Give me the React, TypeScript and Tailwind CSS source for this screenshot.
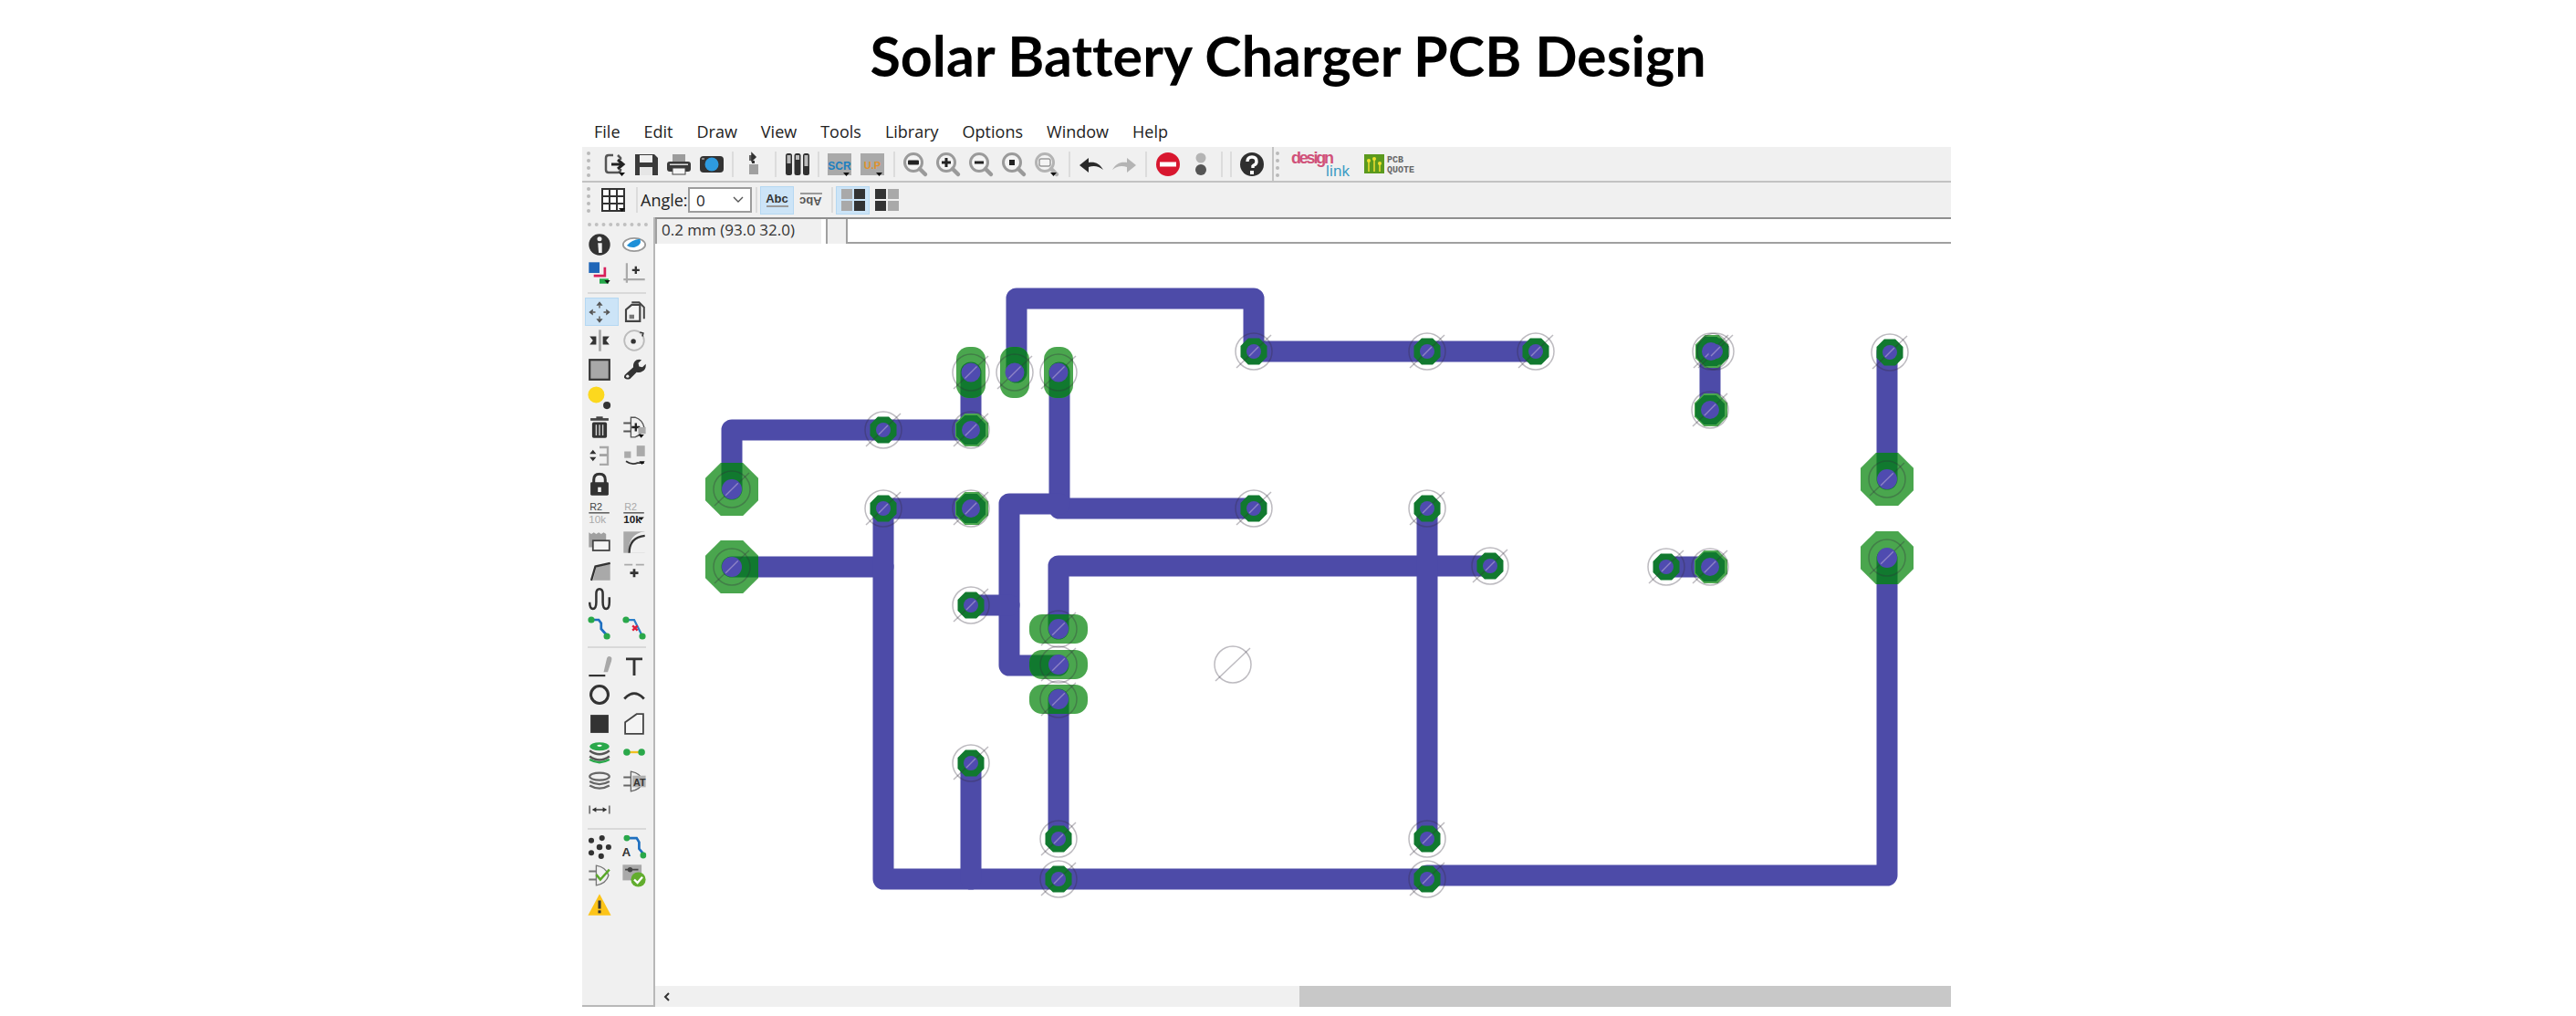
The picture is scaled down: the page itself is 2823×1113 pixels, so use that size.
const D = "#333333";

function Ic({ children, w = 30 }: { children: React.ReactNode; w?: number }) {
  return (
    <svg viewBox={`0 0 ${w} 30`} width={w} height={30}>
      {children}
    </svg>
  );
}

const Caret = ({ x = 22, y = 25 }: { x?: number; y?: number }) => <path d={`M${x} ${y}h7l-3.5 4z`} fill="#111" />;

function Mag({ inner, gray, caret }: { inner: React.ReactNode; gray?: boolean; caret?: boolean }) {
  const s = gray ? "#b3b3b3" : "#9a9a9a";
  return (
    <Ic>
      <circle cx="13" cy="13" r="9.5" fill="#f4f4f4" stroke={s} strokeWidth="3" />
      <path d="M20 20l6 6" stroke={s} strokeWidth="4.5" strokeLinecap="round" />
      {inner}
      {caret && <Caret x={19} y={24} />}
    </Ic>
  );
}

function Tool({ children, className = "" }: { children: React.ReactNode; className?: string }) {
  return <div className={`w-[36px] h-[36px] flex items-center justify-center shrink-0 ${className}`}>{children}</div>;
}

function Sep({ className = "w-[9px]" }: { className?: string }) {
  return (
    <div className={`h-[28px] flex justify-center shrink-0 ${className}`}>
      <div className="w-[2px] h-full bg-[#dcdcdc]" />
    </div>
  );
}

function Grip() {
  return <div className="w-[4px] h-[28px] border-l-4 border-dotted border-[#b9b9b9] shrink-0" />;
}

function TopBar() {
  return (
    <div className="h-[39px] bg-[#f0f0f0] border-b-2 border-[#c2c2c2] flex items-center pl-[5px]">
      <Grip />
      <div className="w-[10px]" />
      <Tool>
        <Ic>
          <path d="M12 5H7q-3 0-3 3v13q0 3 3 3h10q3 0 3-3v-1M20 10V8l-3-3" fill="none" stroke="#555" strokeWidth="2.5" />
          <path d="M10 15h11M17 10l6 5-6 5" fill="none" stroke="#222" strokeWidth="3" />
          <Caret x={18} y={24} />
        </Ic>
      </Tool>
      <Tool className="-ml-[3px]">
        <Ic>
          <path d="M3 4h21l4 4v19H3z" fill="#3a3a3a" />
          <rect x="8" y="5" width="14" height="8" fill="#f0f0f0" />
          <rect x="8" y="18" width="14" height="9" fill="#e6e6e6" />
        </Ic>
      </Tool>
      <Tool>
        <Ic>
          <rect x="8" y="4" width="14" height="8" fill="#9c9c9c" />
          <rect x="2" y="12" width="26" height="11" rx="3" fill="#3a3a3a" />
          <rect x="8" y="19" width="14" height="7" fill="#f4f4f4" stroke="#444" />
          <rect x="5" y="14.5" width="20" height="1.5" fill="#ddd" />
        </Ic>
      </Tool>
      <Tool>
        <Ic>
          <rect x="2" y="6" width="26" height="18" rx="4" fill="#333" />
          <circle cx="15" cy="15" r="7.5" fill="#2e9be0" />
          <rect x="4" y="8" width="3" height="2" fill="#888" />
        </Ic>
      </Tool>
      <Sep className="w-[10px]" />
      <Tool>
        <Ic>
          <path d="M13 3l4 4-4 4zM10 8h4M10 6h3M10 10h3" stroke={D} strokeWidth="1.5" fill={D} />
          <rect x="13" y="11" width="3" height="3" fill={D} />
          <rect x="10" y="15" width="10" height="11" fill="#a0a0a0" />
        </Ic>
      </Tool>
      <Sep className="w-[12px]" />
      <Tool>
        <Ic>
          <rect x="2" y="3" width="7" height="24" rx="2.5" fill="#303030" />
          <rect x="11.5" y="3" width="7" height="24" rx="2.5" fill="#303030" />
          <rect x="21" y="3" width="7" height="24" rx="2.5" fill="#303030" />
          <rect x="3.5" y="5" width="4" height="9" fill="#bbb" />
          <rect x="13" y="5" width="4" height="5" fill="#bbb" />
          <rect x="22.5" y="5" width="4" height="12" fill="#bbb" />
        </Ic>
      </Tool>
      <Sep className="w-[10px]" />
      <Tool>
        <Ic>
          <rect x="2" y="3" width="26" height="24" fill="#a9a9a9" />
          <text x="15" y="21" textAnchor="middle" fontFamily="Liberation Sans" fontSize="12" fontWeight="700" fill="#1c7fc0">SCR</text>
          <Caret x={19} y={24} />
        </Ic>
      </Tool>
      <Tool>
        <Ic>
          <rect x="2" y="3" width="26" height="24" fill="#a9a9a9" />
          <text x="15" y="20" textAnchor="middle" fontFamily="Liberation Sans" fontSize="11" fontWeight="700" fill="#e0912a">U.P</text>
          <Caret x={19} y={24} />
        </Ic>
      </Tool>
      <Sep className="w-[11px]" />
      <Tool>
        <Mag inner={<rect x="7" y="10.5" width="12" height="5" rx="1" fill="#222" />} />
      </Tool>
      <Tool>
        <Mag inner={<path d="M13 8v10M8 13h10" stroke="#222" strokeWidth="3" />} />
      </Tool>
      <Tool>
        <Mag inner={<path d="M8 13h10" stroke="#222" strokeWidth="3" />} />
      </Tool>
      <Tool>
        <Mag inner={<rect x="10" y="10" width="6" height="6" fill="#222" />} />
      </Tool>
      <Tool>
        <Mag gray caret inner={<rect x="7" y="9" width="12" height="8" rx="2" fill="#f4f4f4" stroke="#999" strokeWidth="1.5" />} />
      </Tool>
      <Sep className="w-[13px]" />
      <Tool>
        <Ic>
          <path d="M2 16l10-8v5c7-1 12 1 16 8-5-4-10-5-16-3v6z" fill="#2a2a2a" />
        </Ic>
      </Tool>
      <Tool>
        <Ic>
          <path d="M28 16L18 8v5C11 12 6 14 2 21c5-4 10-5 16-3v6z" fill="#b4b4b4" />
        </Ic>
      </Tool>
      <Sep className="w-[12px]" />
      <Tool>
        <Ic>
          <circle cx="15" cy="15" r="13" fill="#d8172f" />
          <rect x="6" y="12.5" width="18" height="5" fill="#fff" />
        </Ic>
      </Tool>
      <Tool>
        <Ic>
          <circle cx="15" cy="8" r="5.5" fill="#b4b4b4" />
          <circle cx="15" cy="21" r="6" fill="#555" />
        </Ic>
      </Tool>
      <Sep className="w-[10px]" />
      <Sep className="w-[10px]" />
      <Tool>
        <Ic>
          <circle cx="15" cy="15" r="13" fill="#2f2f2f" />
          <path d="M10 12q0-5 5-5t5 5q0 3-3 4l-1 1v2" fill="none" stroke="#fff" strokeWidth="3.4" />
          <rect x="13" y="22" width="4" height="4" fill="#fff" />
        </Ic>
      </Tool>
      <div className="w-[4px]" />
      <div className="w-[2px] h-full bg-[#c4c4c4] mr-[2px]" />
      <Grip />
      <div className="w-[13px]" />
      <svg viewBox="0 0 66 36" width={66} height={36}>
        <text x="0" y="17" fontFamily="Liberation Sans" fontSize="18" fontWeight="700" fill="#d0527a" textLength="47">design</text>
        <text x="38" y="31" fontFamily="Liberation Sans" fontSize="17" fill="#3d9cc5" textLength="26">link</text>
      </svg>
      <div className="w-[14px]" />
      <svg viewBox="0 0 58 24" width={58} height={24}>
        <rect x="0" y="1" width="22" height="21" fill="#5b9a1e" />
        <path d="M5 20V9M11 20V6M17 20V12" stroke="#f0e030" strokeWidth="1.5" />
        <circle cx="5" cy="8" r="2" fill="#f0e030" />
        <circle cx="11" cy="6" r="2" fill="#f0e030" />
        <circle cx="17" cy="11" r="2" fill="#f0e030" />
        <text x="25" y="10" fontFamily="Liberation Mono" fontSize="10" fontWeight="700" fill="#666">PCB</text>
        <text x="25" y="21" fontFamily="Liberation Mono" fontSize="10" fontWeight="700" fill="#666">QUOTE</text>
      </svg>
    </div>
  );
}

function FourSquares({ flip }: { flip?: boolean }) {
  const a = flip ? "bg-[#333]" : "bg-[#a9a9a9]";
  const b = flip ? "bg-[#a9a9a9]" : "bg-[#333]";
  return (
    <div className="grid grid-cols-2 gap-[2px] w-[26px]">
      <div className={`h-[11px] ${a}`} />
      <div className={`h-[11px] ${b}`} />
      <div className={`h-[11px] ${a}`} />
      <div className={`h-[11px] ${b}`} />
    </div>
  );
}

function SecondBar() {
  return (
    <div className="h-[38px] bg-[#f0f0f0] flex items-center pl-[5px]">
      <Grip />
      <div className="w-[10px]" />
      <Ic>
        <rect x="3" y="3" width="24" height="24" fill="#fff" stroke="#333" strokeWidth="2" />
        <path d="M3 11h24M3 19h24M11 3v24M19 3v24" stroke="#333" strokeWidth="2" />
        <Caret x={21} y={24} />
      </Ic>
      <div className="w-[6px]" />
      <Sep />
      <span className="text-[18px] text-[#222] leading-none w-[52px]">Angle:</span>
      <div className="w-[70px] h-[28px] bg-white border-2 border-[#9c9c9c] flex items-center justify-between px-[7px]">
        <span className="text-[17px] text-[#222] leading-none">0</span>
        <svg viewBox="0 0 12 8" width={12} height={8}>
          <path d="M1 1l5 5 5-5" fill="none" stroke="#555" strokeWidth="1.4" />
        </svg>
      </div>
      <Sep />
      <div className="w-[37px] h-[31px] bg-[#cce4f7] border border-[#b5d8f2] flex flex-col items-center justify-center">
        <span className="text-[13px] font-bold text-[#333] leading-none font-['Liberation_Sans']">Abc</span>
        <div className="w-[24px] h-[2px] bg-[#9a9a9a] mt-[1px]" />
      </div>
      <div className="w-[37px] flex flex-col items-center justify-center">
        <div className="w-[24px] h-[2px] bg-[#9a9a9a] mb-[1px]" />
        <span className="text-[13px] font-bold text-[#555] leading-none font-['Liberation_Sans'] rotate-180">Abc</span>
      </div>
      <Sep />
      <div className="w-[37px] h-[31px] bg-[#cce4f7] border border-[#b5d8f2] flex items-center justify-center">
        <FourSquares />
      </div>
      <div className="w-[37px] flex items-center justify-center">
        <FourSquares flip />
      </div>
    </div>
  );
}

function LeftSep() {
  return <div className="h-[2px] mx-[6px] bg-[#d9d9d9]" />;
}

const leftA = [
  <Ic key="i">
    <circle cx="15" cy="15" r="13" fill="#333" />
    <circle cx="15" cy="8" r="2.8" fill="#f0f0f0" />
    <path d="M13 13h5v12h-4z" fill="#f0f0f0" />
  </Ic>,
  <Ic key="eye">
    <ellipse cx="15" cy="15" rx="13.5" ry="8" fill="#fff" stroke="#999" strokeWidth="2" />
    <path d="M6 16q6-7 16-8 3 7-6 10-6 1-10-2z" fill="#1e90d8" />
  </Ic>,
  <Ic key="layers">
    <rect x="2" y="2" width="13" height="13" fill="#1f66b8" />
    <path d="M8 17h12V8h3v12H8z" fill="#d81f5a" />
    <rect x="15" y="22" width="11" height="6" fill="#25a84a" />
    <Caret x={21} y={24} />
  </Ic>,
  <Ic key="axis">
    <path d="M6 3v24M2 23h26" stroke="#aaa" strokeWidth="2.5" />
    <path d="M17 7v9M12.5 11.5h9" stroke="#333" strokeWidth="2.6" />
  </Ic>,
];

const leftB = [
  <Ic key="move">
    <path d="M15 2l4 5h-8zM15 28l-4-5h8zM2 15l5-4v8zM28 15l-5 4v-8z" fill="#555" />
    <path d="M15 7v3M15 20v3M7 15h3M20 15h3" stroke="#777" strokeWidth="2" />
  </Ic>,
  <Ic key="copy">
    <path d="M12 6l4 0 6 0 0 20H5V12z" fill="#f4f4f4" stroke="#444" strokeWidth="2.4" />
    <path d="M12 3h9l6 6v14" fill="none" stroke="#444" strokeWidth="2.2" />
    <rect x="9" y="18" width="6" height="5" fill="#777" />
  </Ic>,
  <Ic key="mirror">
    <rect x="14" y="2" width="3" height="26" fill="#a9a9a9" />
    <path d="M3 10h8v10H3l4-5zM27 10h-8v10h8l-4-5z" fill="#333" />
  </Ic>,
  <Ic key="rot">
    <circle cx="15" cy="15" r="12" fill="none" stroke="#bbb" strokeWidth="2" />
    <circle cx="14" cy="16" r="3" fill="#333" />
    <path d="M22 5l4 1-1 4" fill="none" stroke="#333" strokeWidth="1.6" />
  </Ic>,
  <Ic key="square">
    <rect x="3" y="3" width="24" height="24" fill="#a8a8a8" stroke="#333" strokeWidth="2.4" />
  </Ic>,
  <Ic key="wrench">
    <path d="M3 25q-1-3 2-5l9-8q-1-6 4-9 3-1 6 0l-4 4 1 4 4 1 4-4q1 6-4 9-3 2-7 1l-8 8q-4 2-7-1z" fill="#333" />
    <circle cx="7" cy="23" r="1.8" fill="#f0f0f0" />
  </Ic>,
  <Ic key="dot">
    <circle cx="11" cy="11" r="10" fill="#fcd81e" />
    <circle cx="24" cy="24" r="4.5" fill="#333" />
  </Ic>,
  <span key="empty" />,
  <Ic key="trash">
    <rect x="6" y="9" width="18" height="19" rx="2" fill="#333" />
    <rect x="4" y="4" width="22" height="3" fill="#444" />
    <rect x="11" y="2" width="8" height="3" fill="#444" />
    <path d="M11 12v13M15 12v13M19 12v13" stroke="#cfcfcf" strokeWidth="1.6" />
  </Ic>,
  <Ic key="plug">
    <path d="M11 3h5q9 3 11 12-2 9-11 12h-5z" fill="#f0f0f0" stroke="#555" strokeWidth="1.5" />
    <path d="M2 10h9M2 20h9" stroke="#555" strokeWidth="2" />
    <path d="M17 10v10M12 15h10" stroke="#222" strokeWidth="2.6" />
    <rect x="20" y="15" width="9" height="8" fill="#a9a9a9" />
    <Caret x={20} y={24} />
  </Ic>,
  <Ic key="swap">
    <path d="M7 8l4 5H3zM7 22l-4-5h8z" fill="#333" />
    <path d="M15 5h10v21H15" fill="none" stroke="#a9a9a9" strokeWidth="2.6" />
    <rect x="15" y="13" width="9" height="3" fill="#a0a0a0" />
  </Ic>,
  <Ic key="align">
    <rect x="3" y="10" width="8" height="8" fill="#aaa" />
    <rect x="18" y="3" width="10" height="13" fill="#aaa" />
    <path d="M5 22q7 5 14 2h8" fill="none" stroke="#333" strokeWidth="2" />
    <Caret x={21} y={22} />
  </Ic>,
  <Ic key="lock">
    <path d="M8 13V9q0-7 7-7t7 7v4" fill="none" stroke="#333" strokeWidth="3.4" />
    <rect x="4" y="12" width="22" height="16" rx="1.5" fill="#333" />
    <path d="M13 18h4v6h-4z" fill="#f0f0f0" />
  </Ic>,
  <span key="empty2" />,
  <svg key="r1" viewBox="0 0 30 30" width={30} height={30}>
    <text x="3" y="12" fontFamily="Liberation Sans" fontSize="12" fill="#444">R2</text>
    <rect x="2" y="14" width="25" height="1.6" fill="#555" />
    <text x="2" y="27" fontFamily="Liberation Sans" fontSize="13" fill="#aaa">10k</text>
  </svg>,
  <svg key="r2" viewBox="0 0 30 30" width={30} height={30}>
    <text x="3" y="12" fontFamily="Liberation Sans" fontSize="12" fill="#aaa">R2</text>
    <rect x="2" y="14" width="25" height="1.6" fill="#555" />
    <text x="2" y="27" fontFamily="Liberation Sans" fontSize="13" fontWeight="700" fill="#222">10k</text>
    <Caret x={20} y={20} />
  </svg>,
  <Ic key="zone">
    <path d="M2 3l3 2 3-2 3 2 3-2 3 2 3-2 3 2v16H2z" fill="#a0a0a0" />
    <rect x="7" y="13" width="20" height="12" fill="#f4f4f4" stroke="#444" strokeWidth="2" />
  </Ic>,
  <Ic key="fillet">
    <rect x="2" y="2" width="26" height="26" fill="#a9a9a9" />
    <path d="M29 2v0H28Q8 4 8 28H29V2z" fill="#f0f0f0" />
    <path d="M28 7Q9 9 9 28" fill="none" stroke="#333" strokeWidth="2.6" />
  </Ic>,
  <Ic key="cham">
    <path d="M7 27L11 11 28 6v21z" fill="#a9a9a9" />
    <path d="M5 27L10 10 28 6" fill="none" stroke="#333" strokeWidth="2.6" />
  </Ic>,
  <Ic key="split">
    <path d="M3 8h10M17 8h10" stroke="#aaa" strokeWidth="2" />
    <path d="M15 13v10M10 18h10" stroke="#333" strokeWidth="3" />
  </Ic>,
  <Ic key="wave">
    <path d="M3 18q0 8 4 8t4-8V8q0-6 4-6t4 6v10q0 8 4 8t4-8v-6" fill="none" stroke="#333" strokeWidth="2.8" />
  </Ic>,
  <span key="empty3" />,
  <Ic key="route">
    <path d="M5 5h9l3 4v7l8 9" fill="none" stroke="#1e6fc0" strokeWidth="3" />
    <circle cx="5" cy="5" r="4" fill="#2aa84a" />
    <circle cx="24" cy="25" r="4" fill="#2aa84a" />
  </Ic>,
  <Ic key="unroute">
    <path d="M5 5h10l10 20" fill="none" stroke="#2a7fc8" strokeWidth="2.5" />
    <circle cx="5" cy="5" r="4" fill="#2aa84a" />
    <circle cx="25" cy="25" r="4" fill="#2aa84a" />
    <path d="M13 12l6 6M19 12l-6 6" stroke="#e01f3d" strokeWidth="2.6" />
  </Ic>,
];

const leftC = [
  <Ic key="line">
    <rect x="2" y="25" width="20" height="2.4" fill="#333" />
    <path d="M20 22l4-17q1-3 4-2t2 4l-5 15z" fill="#a8a8a8" />
  </Ic>,
  <Ic key="t">
    <path d="M5 6h20M15 6v20" stroke="#333" strokeWidth="3.2" fill="none" />
  </Ic>,
  <Ic key="circle">
    <circle cx="15" cy="15" r="10.5" fill="none" stroke="#333" strokeWidth="3.4" />
  </Ic>,
  <Ic key="arc">
    <path d="M3 20Q15 7 27 20" fill="none" stroke="#333" strokeWidth="3" />
  </Ic>,
  <Ic key="rect">
    <rect x="4" y="4" width="22" height="22" fill="#333" />
  </Ic>,
  <Ic key="poly">
    <path d="M4 27V13L18 3h8v24z" fill="#f4f4f4" stroke="#444" strokeWidth="2" />
  </Ic>,
  <Ic key="stack">
    <ellipse cx="15" cy="8" rx="12" ry="5" fill="#2aa84a" />
    <ellipse cx="15" cy="7" rx="3" ry="1.2" fill="#fff" />
    <path d="M3 13q12 9 24 0M3 20q12 9 24 0" fill="none" stroke="#555" strokeWidth="2.6" />
    <path d="M3 24q12 7 24 0" fill="none" stroke="#2aa84a" strokeWidth="2.6" />
  </Ic>,
  <Ic key="link">
    <path d="M6 15h18" stroke="#f0c020" strokeWidth="2.6" />
    <circle cx="6" cy="15" r="4.2" fill="#2aa84a" />
    <circle cx="24" cy="15" r="4.2" fill="#2aa84a" />
  </Ic>,
  <Ic key="disc">
    <ellipse cx="15" cy="9" rx="12" ry="4.5" fill="#f0f0f0" stroke="#666" strokeWidth="2.4" />
    <path d="M3 15q12 7 24 0M3 20q12 7 24 0" fill="none" stroke="#666" strokeWidth="2.6" />
  </Ic>,
  <Ic key="at">
    <path d="M11 3q12 2 15 12-3 10-15 12z" fill="#f0f0f0" stroke="#666" strokeWidth="1.5" />
    <path d="M2 10h9M2 20h9" stroke="#666" strokeWidth="2" />
    <rect x="13" y="8" width="16" height="14" fill="#b0b0b0" />
    <text x="14" y="20" fontFamily="Liberation Sans" fontSize="12" fontWeight="700" fill="#333">AT</text>
  </Ic>,
  <Ic key="dim">
    <path d="M2 10v10h2V10zM26 10v10h2V10z" fill="#777" />
    <path d="M7 15h16" stroke="#333" strokeWidth="1.6" />
    <path d="M6 15l5-3v6zM24 15l-5-3v6z" fill="#333" />
  </Ic>,
  <span key="empty4" />,
];

const leftD = [
  <Ic key="ratsnest">
    <circle cx="15" cy="15" r="3.6" fill="#333" />
    <circle cx="5" cy="7" r="3.4" fill="#333" />
    <circle cx="18" cy="4" r="3.4" fill="#333" />
    <circle cx="5" cy="22" r="3.4" fill="#333" />
    <circle cx="26" cy="15" r="3.4" fill="#333" />
    <circle cx="17" cy="26" r="3.4" fill="#333" />
  </Ic>,
  <Ic key="auto">
    <path d="M7 4h11l3 5v8l6 7" fill="none" stroke="#1e6fc0" strokeWidth="3" />
    <circle cx="6" cy="4" r="3.8" fill="#2aa84a" />
    <circle cx="26" cy="25" r="3.8" fill="#2aa84a" />
    <text x="0" y="26" fontFamily="Liberation Sans" fontSize="15" fontWeight="700" fill="#333">A</text>
  </Ic>,
  <Ic key="gate">
    <path d="M11 3q12 2 15 12-3 10-15 12z" fill="#f0f0f0" stroke="#777" strokeWidth="1.5" />
    <path d="M2 10h9M2 20h9" stroke="#777" strokeWidth="2" />
    <path d="M11 14l5 6 11-12" fill="none" stroke="#5aa82a" strokeWidth="2.8" />
  </Ic>,
  <Ic key="drc">
    <rect x="1" y="2" width="23" height="19" fill="#a9a9a9" />
    <path d="M4 8h16" stroke="#444" strokeWidth="2" />
    <circle cx="10" cy="8" r="3" fill="#444" />
    <circle cx="20" cy="20" r="9" fill="#62ad2e" />
    <path d="M15 20l4 4 6-7" fill="none" stroke="#fff" strokeWidth="2.6" />
  </Ic>,
  <Ic key="warn">
    <path d="M15 2L29 28H1z" fill="#fcc419" />
    <path d="M15 10v10" stroke="#333" strokeWidth="3.4" />
    <rect x="13.3" y="22" width="3.4" height="3.4" fill="#333" />
  </Ic>,
];

function Cells({ items, active }: { items: React.ReactNode[]; active?: boolean }) {
  return (
    <div className="grid grid-cols-2 auto-rows-[31.5px]">
      {items.map((it, i) => (
        <div key={i} className="relative flex items-center justify-center">
          {active && i === 0 && <div className="absolute left-[3px] top-0 w-[37px] h-[31px] bg-[#cce4f7] border border-[#b5d8f2]" />}
          <div className="relative flex scale-[0.9]">{it}</div>
        </div>
      ))}
    </div>
  );
}

function LeftBar() {
  return (
    <div className="w-[80px] bg-[#f0f0f0] border-r-2 border-b-2 border-[#b8b8b8] shrink-0 pt-[14px] relative">
      <div className="absolute top-[6px] left-[6px] right-[6px] h-[4px] border-t-4 border-dotted border-[#c0c0c0]" />
      <div className="pr-[2px]">
        <Cells items={leftA} />
        <div className="h-[11px] flex flex-col justify-center"><LeftSep /></div>
        <Cells items={leftB} active />
        <div className="h-[10px] flex flex-col justify-center"><LeftSep /></div>
        <Cells items={leftC} />
        <div className="h-[9px] flex flex-col justify-center"><LeftSep /></div>
        <Cells items={leftD} />
      </div>
    </div>
  );
}

type P = [number, number];

function octa(x: number, y: number, r: number) {
  const k = r * 0.42;
  return [
    [x - k, y - r], [x + k, y - r], [x + r, y - k], [x + r, y + k],
    [x + k, y + r], [x - k, y + r], [x - r, y + k], [x - r, y - k],
  ].map((p) => p.join(",")).join(" ");
}

const traces = [
  "M802 536V471H1064V408",
  "M802 621H968",
  "M1064 557H968V963H1564",
  "M1564 959H2068V612",
  "M1064 836V963",
  "M1161 408V557H1374",
  "M1161 552H1106V729H1160",
  "M1064 663H1106",
  "M1633 620H1160V689",
  "M1160 766V919",
  "M1114 408V327H1374V385H1683",
  "M1564 557V919",
  "M1874 385V449",
  "M2068 386V525",
  "M1826 621H1874",
];

const bigPads: P[] = [[802, 536], [802, 621], [2068, 525], [2068, 611]];
const tallPads: P[] = [[1064, 408], [1112, 408], [1160, 408]];
const widePads: P[] = [[1160, 689], [1160, 728], [1160, 766]];
const rimPads: P[] = [[1064, 471], [1064, 557], [1874, 621], [1875, 385], [1874, 449]];
const smallPads: P[] = [
  [968, 471], [968, 557], [1374, 385], [1564, 385], [1683, 385], [1374, 557], [1564, 557], [1633, 620],
  [1064, 663], [1064, 836], [1160, 919], [1160, 963], [1564, 919], [1564, 963], [1826, 621], [1880, 385], [2071, 386],
];

function Ring({ p }: { p: P }) {
  const [x, y] = p;
  return (
    <g fill="none" stroke="#332a3a" strokeOpacity="0.32" strokeWidth="1.5">
      <circle cx={x} cy={y} r="20" />
      <path d={`M${x - 19} ${y + 18}L${x + 19} ${y - 18}`} />
    </g>
  );
}

function Hole({ p, r }: { p: P; r: number }) {
  const [x, y] = p;
  const d = r * 0.62;
  return (
    <g>
      <circle cx={x} cy={y} r={r} fill="#4f4bb0" />
      <path d={`M${x - d} ${y + d}L${x + d} ${y - d}`} stroke="#8f84c6" strokeWidth="1.3" />
    </g>
  );
}

function Board() {
  const lightShapes = (
    <>
      {bigPads.map((p) => <polygon key={p.join()} points={octa(p[0], p[1], 29)} />)}
      {tallPads.map((p) => <rect key={p.join()} x={p[0] - 16} y={p[1] - 28} width="32" height="56" rx="14" />)}
      {widePads.map((p) => <rect key={p.join()} x={p[0] - 32} y={p[1] - 16} width="64" height="32" rx="14" />)}
    </>
  );
  return (
    <svg viewBox="718 268 1420 812" className="block w-full flex-1 min-h-0 bg-white">
      <defs>
        <clipPath id="padclip">{lightShapes}</clipPath>
      </defs>
      <g fill="none" stroke="#4d4ba8" strokeWidth="23" strokeLinejoin="round" strokeLinecap="round">
        {traces.map((d) => <path key={d} d={d} />)}
      </g>
      <g fill="#4aa64e">{lightShapes}</g>
      <g clipPath="url(#padclip)" fill="none" stroke="#11792f" strokeWidth="23" strokeLinecap="round">
        {traces.map((d) => <path key={d} d={d} />)}
      </g>
      {rimPads.map((p) => <polygon key={p.join()} points={octa(p[0] + 1, p[1], 18)} fill="#4aa64e" />)}
      {rimPads.map((p) => <polygon key={p.join()} points={octa(p[0], p[1], 16)} fill="#11792f" />)}
      {smallPads.map((p) => <polygon key={p.join()} points={octa(p[0], p[1], 14.5)} fill="#11792f" />)}
      {[...bigPads, ...tallPads, ...widePads, ...rimPads, ...smallPads, [1351, 728] as P].map((p) => <Ring key={p.join()} p={p} />)}
      {bigPads.map((p) => <Hole key={p.join()} p={p} r={11} />)}
      {tallPads.map((p) => <Hole key={p.join()} p={p} r={10.5} />)}
      {widePads.map((p) => <Hole key={p.join()} p={p} r={11} />)}
      {rimPads.map((p) => <Hole key={p.join()} p={p} r={10} />)}
      {smallPads.map((p) => <Hole key={p.join()} p={p} r={8} />)}
    </svg>
  );
}

const menus = ["File", "Edit", "Draw", "View", "Tools", "Library", "Options", "Window", "Help"];

export default function App() {
  return (
    <div className="w-full h-[1113px] bg-white overflow-hidden flex flex-col font-['Open_Sans',sans-serif]">
      <h1 className="h-[125px] flex items-center justify-center pb-[4px] shrink-0 font-['Lato',sans-serif] font-bold text-[61px] text-black leading-none [font-variant-ligatures:none]">
        Solar Battery Charger PCB Design
      </h1>
      <div className="ml-[638px] w-[1500px] flex flex-col">
        <div className="h-[36px] flex items-center gap-[26px] pl-[13px] pt-[2px] text-[18px] text-[#222]">
          {menus.map((m) => (
            <span key={m}>{m}</span>
          ))}
        </div>
        <TopBar />
        <SecondBar />
        <div className="h-[865px] flex">
          <LeftBar />
          <div className="flex-1 min-w-0 flex flex-col">
            <div className="h-[30px] shrink-0 flex border-t-2 border-[#8f8f8f] bg-white">
              <div className="w-[182px] h-[27px] bg-[#f0f0f0] border-l-2 border-[#a0a0a0] pl-[5px] text-[17px] text-[#333] leading-[24px]">
                0.2 mm (93.0 32.0)
              </div>
              <div className="w-[22px] h-[27px] ml-[5px] bg-[#f0f0f0] border-l-2 border-[#a0a0a0]" />
              <div className="flex-1 h-[27px] border-l-2 border-b-2 border-[#a0a0a0] bg-white" />
            </div>
            <Board />
            <div className="h-[23px] shrink-0 bg-[#f0f0f0] flex items-center pl-[8px]">
              <svg viewBox="0 0 10 10" width={10} height={10}>
                <path d="M7 1L3 5l4 4" fill="none" stroke="#333" strokeWidth="2" />
              </svg>
              <div className="ml-auto w-[714px] h-full bg-[#c8c8c8]" />
            </div>
          </div>
        </div>
      </div>
    </div>
  );
}
